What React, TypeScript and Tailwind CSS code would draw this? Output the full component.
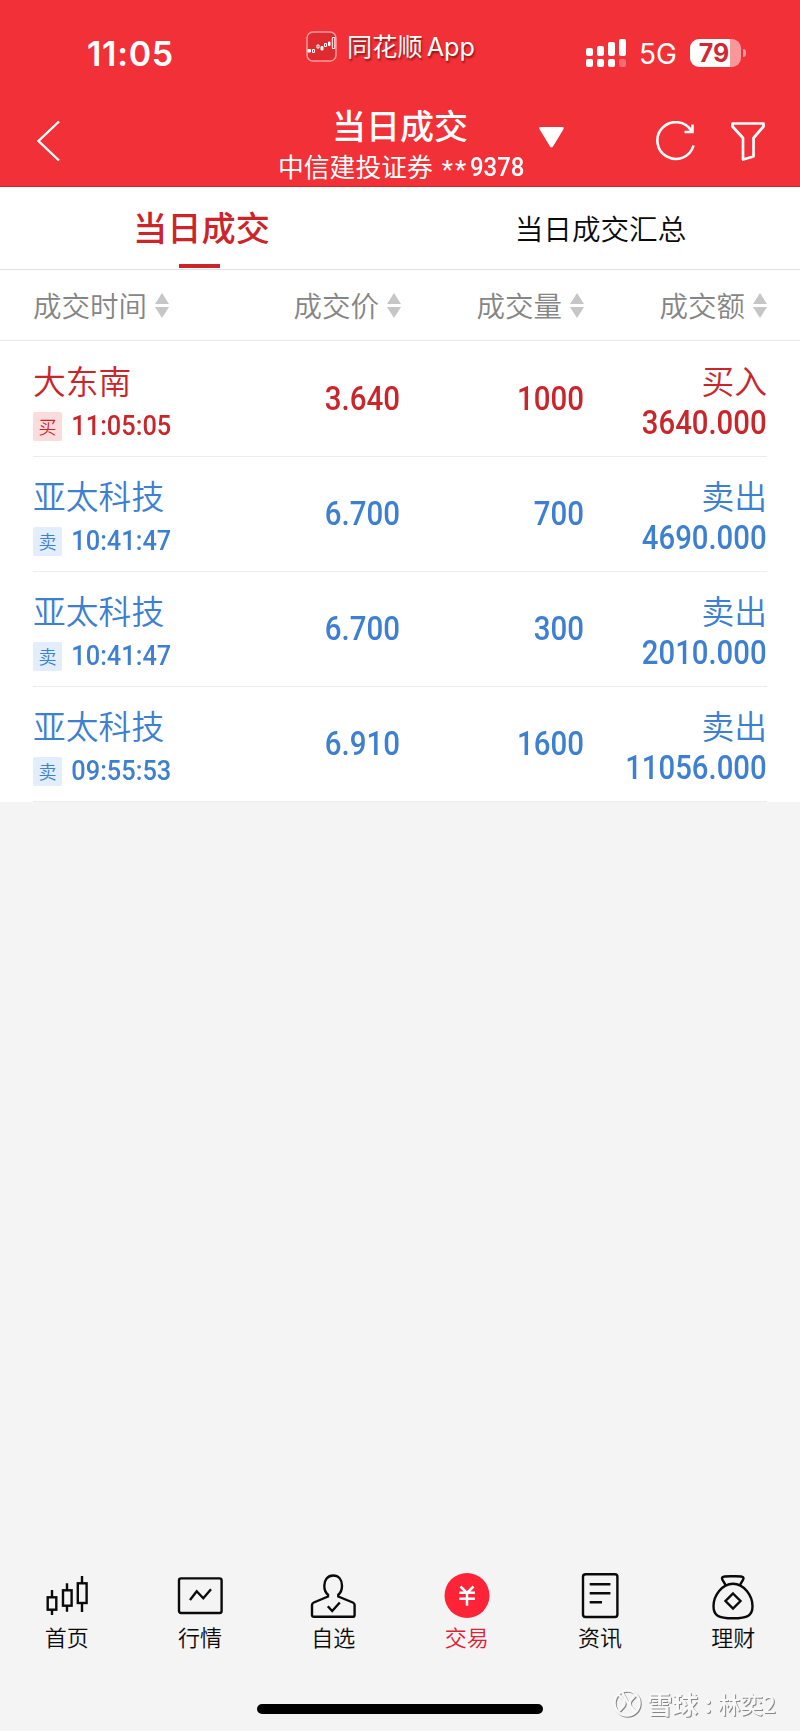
import type { ReactNode } from 'react';
import clsx from 'clsx';

type Trade = {
  name: string;
  side: 'buy' | 'sell';
  time: string;
  price: string;
  volume: string;
  amount: string;
};

const trades: Trade[] = [
  { name: '大东南', side: 'buy', time: '11:05:05', price: '3.640', volume: '1000', amount: '3640.000' },
  { name: '亚太科技', side: 'sell', time: '10:41:47', price: '6.700', volume: '700', amount: '4690.000' },
  { name: '亚太科技', side: 'sell', time: '10:41:47', price: '6.700', volume: '300', amount: '2010.000' },
  { name: '亚太科技', side: 'sell', time: '09:55:53', price: '6.910', volume: '1600', amount: '11056.000' },
];

const StatusBar = () => (
  <div className="flex h-[98px] items-start">
    <div className="ml-[87px] mt-[33px] w-[219px] font-[Inter,sans-serif] text-[34px] font-semibold leading-[41px] tracking-[.7px]">
      11:05
    </div>
    <svg className="mt-[31px] h-[31px] w-[31px] shrink-0" viewBox="0 0 31 31" fill="none">
      <rect x="1" y="1" width="29" height="29" rx="6" fill="#df2a30" stroke="#ff9a9c" strokeWidth="1.5" />
      <path d="M2 18.500h2.500v2.500H2zM15 15.500h2v3.500h-2zM22.500 11h1.500v3.500h-1.500z" fill="#fff" stroke="#fff" />
      <path d="M6.500 18.500h2v3h-2zM11 14h2v3h-2zM18.500 12.500h2v3h-2zM26.300 6.500h2.500v11h-2.500z" stroke="#fff" />
    </svg>
    <div className="ml-[10px] mt-[28px] w-[239px] whitespace-nowrap font-[Inter,'Noto_Sans_CJK_SC',sans-serif] text-[25.200px] leading-[38px] [text-shadow:1px_2px_2px_rgba(90,0,0,.65)] [word-spacing:-3px]">
      同花顺 App
    </div>
    <svg className="mt-[39px] h-7 w-[41px] shrink-0" viewBox="0 0 41 28" fill="#fff">
      <rect x="0" y="9" width="7" height="8" rx="2" />
      <rect x="11" y="7" width="7" height="10" rx="2" />
      <rect x="22" y="3" width="7" height="14" rx="2" />
      <rect x="33" y="0" width="7" height="17" rx="2" />
      <rect x="0" y="20" width="7" height="8" rx="2" />
      <rect x="11" y="20" width="7" height="8" rx="2" />
      <rect x="22" y="20" width="7" height="8" rx="2" />
      <rect x="33" y="20" width="7" height="8" rx="2" opacity=".3" />
    </svg>
    <div className="ml-[12px] mt-[37px] w-[51px] font-[Inter,sans-serif] text-[28px] leading-[34px]">5G</div>
    <div className="mt-[39px] flex h-7 w-[51px] shrink-0 items-center justify-center rounded-[9px] bg-linear-to-r from-white from-79% to-[#f8989b] to-79% pr-[3px] font-[Inter,sans-serif] text-[25px] font-bold leading-7 text-[#cf2a33]">
      79
    </div>
    <div className="ml-[2px] mt-[49px] h-2 w-[3px] rounded-r-full bg-[#f8989b]" />
  </div>
);

const TitleBar = () => (
  <div className="flex h-[87px] items-start">
    <svg className="ml-[36px] mt-[22px] h-[42px] w-6" viewBox="0 0 24 42" fill="none" stroke="#fff" strokeWidth="2.4">
      <path d="M23 1.500 2.500 21 23 40.500" />
    </svg>
    <div className="ml-[200px] flex w-[280px] flex-col items-center">
      <div className="mt-[2px] font-medium text-[34px] leading-[50px]">当日成交</div>
      <div className="-mt-[3px] ml-[6px] flex w-[250px] whitespace-nowrap text-[25.800px] leading-[38px]">
        <span>中信建投证券</span>
        <span className="ml-[9px] mt-[4px] font-[Roboto,sans-serif] text-[26px] tracking-[2px]">**</span>
        <span className="ml-[2px] mt-px origin-left scale-x-[.92] font-[Roboto,sans-serif] text-[26px] font-medium">
          9378
        </span>
      </div>
    </div>
    <svg className="-ml-[1px] mt-[29px] h-[21px] w-[25px]" viewBox="0 0 25 21" fill="#fff">
      <path d="M2 0h21q3 0 1 3L14 19.500q-1.500 2-3 0L1 3Q-1 0 2 0z" />
    </svg>
    <svg className="ml-[92px] mt-[23px] h-[42px] w-10" viewBox="0 0 40 42" fill="none" stroke="#fff" strokeWidth="2.6">
      <path d="M37.500 24.500A18.400 18.400 0 1 1 35.500 10" />
      <path d="M36.500 3.500V11h-8" />
    </svg>
    <svg className="ml-[35px] mt-[24px] h-10 w-[34px]" viewBox="0 0 34 40" fill="none" stroke="#fff" strokeWidth="2.700" strokeLinejoin="round">
      <path d="M1.500 1.500h31v3L22.500 16v18.500L12 37.500V16L1.500 4.500z" />
    </svg>
  </div>
);

const SortHeader = ({ children }: { children: ReactNode }) => (
  <div className="flex items-center gap-[8px] whitespace-nowrap">
    <span>{children}</span>
    <svg className="mt-px h-[25px] w-[14px]" viewBox="0 0 14 25" fill="#c6c6c6">
      <path d="M7 0l7 11H0zM7 25l7-11H0z" />
    </svg>
  </div>
);

const TradeRow = ({ trade }: { trade: Trade }) => {
  const isBuy = trade.side === 'buy';

  return (
    <div
      className={clsx(
        'mx-[33px] grid h-[115px] grid-cols-[200px_167px_184px_183px] border-b border-[#ececec]',
        isBuy ? 'text-[#c9262b]' : 'text-[#3d7fd1]'
      )}
    >
      <div className="flex flex-col">
        <div className="mt-[15px] text-[32.800px] font-[350] leading-[46px]">{trade.name}</div>
        <div className="mt-[9px] flex h-[29px] items-center">
          <span
            className={clsx(
              'flex h-[29px] w-[29px] items-center justify-center rounded-[2px] pb-px text-[18px] font-[350]',
              isBuy ? 'bg-[#fbdcdd]' : 'bg-[#e2eefb]'
            )}
          >
            {isBuy ? '买' : '卖'}
          </span>
          <div className="flex w-[109px] justify-end">
            <span className="origin-right scale-x-[.89] font-[Roboto,sans-serif] text-[28.500px] font-medium">
              {trade.time}
            </span>
          </div>
        </div>
      </div>
      <div className="mt-[37px] flex h-10 origin-right scale-x-[.88] items-center justify-end font-[Roboto,sans-serif] text-[33.500px] font-medium">
        {trade.price}
      </div>
      <div className="mt-[37px] flex h-10 origin-right scale-x-[.88] items-center justify-end font-[Roboto,sans-serif] text-[33.500px] font-medium">
        {trade.volume}
      </div>
      <div className="flex flex-col items-end">
        <div className="mt-[15px] text-[32.800px] font-[350] leading-[46px]">{isBuy ? '买入' : '卖出'}</div>
        <div className="origin-right scale-x-[.875] font-[Roboto,sans-serif] text-[33.500px] font-medium leading-10">
          {trade.amount}
        </div>
      </div>
    </div>
  );
};

const NavItem = ({ label, active, children }: { label: string; active?: boolean; children: ReactNode }) => (
  <div className={clsx('flex flex-col items-center', active ? 'text-[#e01f34]' : 'text-[#0a0a0a]')}>
    <svg className="h-12 w-12" viewBox="0 0 48 48" fill="none" stroke="currentColor" strokeWidth="2.400">
      {children}
    </svg>
    <span className="text-[22px] font-[350] leading-8">{label}</span>
  </div>
);

const BottomNav = () => (
  <nav className="grid grid-cols-6">
    <NavItem label="首页">
      <path d="M9 18v7M9 38v5M24 11.300v7M24 34v5.700M39 4v7M39 31v9" />
      <rect x="4.700" y="25.300" width="8.600" height="12.400" />
      <rect x="20" y="18.300" width="8.600" height="15.400" />
      <rect x="34.800" y="11.300" width="8.800" height="19.700" />
    </NavItem>
    <NavItem label="行情">
      <rect x="3" y="6.400" width="42.600" height="34.600" rx="2" />
      <path d="M14 28l6.700-8.700 6.600 7L35 17.300" />
    </NavItem>
    <NavItem label="自选">
      <path d="M19 24.500v-1.800c-3-2.400-3.700-5.500-3.700-9C15.300 8 18.500 3.500 24.200 3.500S33 8 33 13.700c0 3.500-.7 6.600-3.700 9v1.800l14.500 6q1.800.8 1.800 2.600v9.800q0 1.900-1.900 1.900H4.900Q3 44.800 3 42.900v-9.800q0-1.800 1.800-2.600z" />
      <path d="M18.800 34.200l4.400 4.800 7.600-8.500" />
    </NavItem>
    <NavItem label="交易" active>
      <circle cx="24" cy="23.500" r="22.500" fill="#fd2438" stroke="none" />
      <path d="M17.500 14.500L24 21l6.500-6.500M16.300 20.700h15.600M16.300 26.800h15.600M24 20v13.700" stroke="#fff" strokeWidth="2.500" />
    </NavItem>
    <NavItem label="资讯">
      <rect x="7" y="2.300" width="34.400" height="42.700" rx="2.500" />
      <path d="M13.700 12.300h20.700M13.700 21.300h20.700M13.700 30.300H26" />
    </NavItem>
    <NavItem label="理财">
      <path d="M16.500 13.500C16 10.500 13 8.500 13 6.500c0-2.500 5-2.200 11-2.200s10.500-.3 10.500 2.200c0 2-3 4-3.500 7" />
      <path d="M24 11.800c-11 0-19.500 12-19.500 22.500 0 9 4.500 12 19.500 12s19.500-3 19.500-12C43.500 23.800 35 11.800 24 11.800z" />
      <path d="M24 21.500l7.500 7.500-7.500 7.500-7.500-7.500z" />
    </NavItem>
  </nav>
);

const Watermark = () => (
  <div className="absolute bottom-[10px] left-[613px] flex items-center whitespace-nowrap text-[#f8f8f8] [filter:drop-shadow(1.500px_1.500px_.7px_rgba(0,0,0,.45))]">
    <svg className="h-7 w-7" viewBox="0 0 28 28" fill="none" stroke="currentColor" strokeWidth="2.500">
      <circle cx="14" cy="14" r="12.500" />
      <path d="M5 5l5.500 6q2 3 0 6L6 22M22.500 6l-5 5.500q-2 3 0 5.500l5 5.500M9 3l12 22" />
    </svg>
    <span className="ml-[6px] text-[25.500px] font-bold leading-9">雪球</span>
    <span className="ml-[6px] w-[14px] text-[24px] font-bold leading-9">:</span>
    <span className="text-[22.500px] font-medium leading-9">林奕2</span>
  </div>
);

export default function App() {
  return (
    <div className="relative flex h-[1731px] w-[800px] flex-col overflow-hidden bg-[#f4f4f4] font-['Noto_Sans_CJK_SC',sans-serif]">
      <header className="h-[187px] border-b border-[#cb262c] bg-[#f23037] text-white">
        <StatusBar />
        <TitleBar />
      </header>
      <div className="grid h-[83px] grid-cols-2 border-b border-[#e2e2e2] bg-white">
        <div className="flex flex-col items-center">
          <div className="ml-[3px] mt-[14px] h-[50px] text-[34.200px] font-medium leading-[50px] text-[#cd2429]">
            当日成交
          </div>
          <div className="mr-[2px] mt-[13px] h-1 w-[41px] shrink-0 bg-[#cd2429]" />
        </div>
        <div className="ml-px mt-[20px] text-center text-[28.600px] font-[350] leading-[42px] text-[#0a0a0a]">
          当日成交汇总
        </div>
      </div>
      <div className="flex h-[71px] shrink-0 items-center border-b border-[#e8e8e8] bg-white px-[33px] text-[28.500px] font-[350] leading-[42px] text-[#858585]">
        <div className="w-[200px]">
          <SortHeader>成交时间</SortHeader>
        </div>
        <div className="flex w-[168px] justify-end">
          <SortHeader>成交价</SortHeader>
        </div>
        <div className="flex w-[183px] justify-end">
          <SortHeader>成交量</SortHeader>
        </div>
        <div className="flex w-[183px] justify-end">
          <SortHeader>成交额</SortHeader>
        </div>
      </div>
      <div className="bg-white pt-px">
        {trades.map((trade, i) => (
          <TradeRow key={i} trade={trade} />
        ))}
      </div>
      <div className="mt-auto h-[159px]">
        <BottomNav />
        <div className="mx-auto mt-[52px] h-[10px] w-[286px] rounded-full bg-black" />
      </div>
      <Watermark />
    </div>
  );
}
